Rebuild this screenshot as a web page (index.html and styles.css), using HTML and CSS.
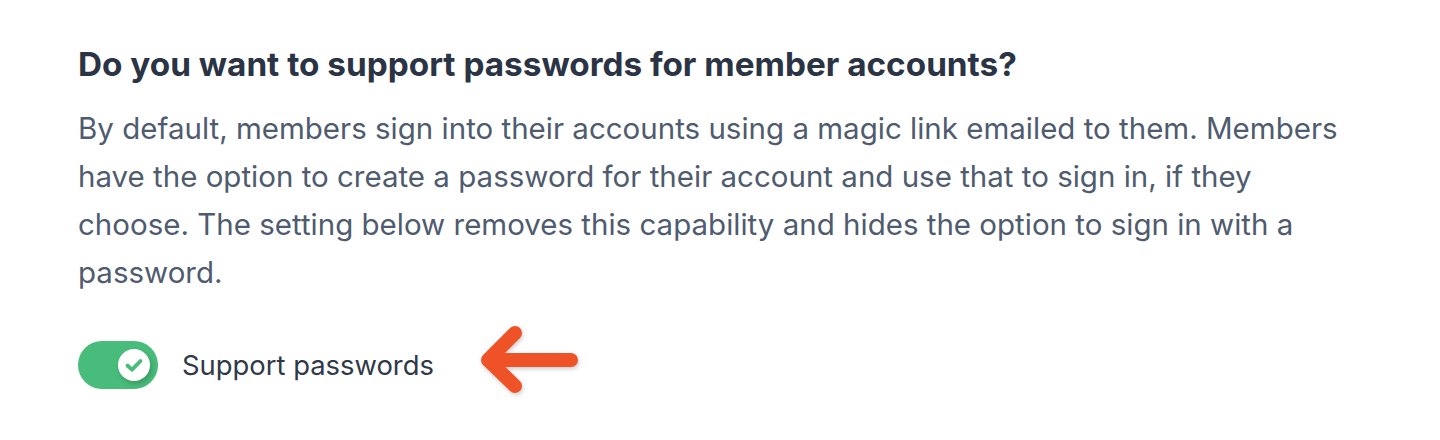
FILE: index.html
```html
<!DOCTYPE html>
<html>
<head>
<meta charset="utf-8">
<link rel="stylesheet" href="styles.css">
</head>
<body>
<div class="panel">
  <h2 class="title">Do you want to support passwords for member accounts?</h2>
  <p class="desc">By default, members sign into their accounts using a magic link emailed to them. Members have the option to create a password for their account and use that to sign in, if they choose. The setting below removes this capability and hides the option to sign in with a password.</p>
  <div class="row">
    <span class="toggle">
      <span class="knob">
        <svg width="20" height="16" viewBox="0 0 20 16"><path d="M3.5 8.5l4.5 4.2L16.5 4" fill="none" stroke="#48bc7a" stroke-width="3.8" stroke-linecap="round" stroke-linejoin="round"/></svg>
      </span>
    </span>
    <span class="label">Support passwords</span>
    <svg class="arrow" width="110" height="80" viewBox="0 0 110 80">
      <g fill="none" stroke="#f05228" stroke-width="14" stroke-linecap="round" stroke-linejoin="round">
        <path d="M35 13L8 40L35 66M8 40H91"/>
      </g>
    </svg>
  </div>
</div>
</body>
</html>
```
FILE: styles.css
```css
html, body {
  margin: 0;
  padding: 0;
  background: #ffffff;
}
.panel {
  padding: 40px 78px;
  font-family: Inter, "Open Sans", sans-serif;
}
.title {
  margin: 0;
  font-size: 33.3px;
  line-height: 48px;
  font-weight: 700;
  color: #2b3445;
}
.desc {
  margin: 16px 0 0;
  max-width: 1300px;
  font-size: 29.5px;
  line-height: 48px;
  color: #4f5b6e;
}
.row {
  margin-top: 45px;
  display: flex;
  align-items: center;
  height: 48px;
}
.toggle {
  width: 80px;
  height: 48px;
  border-radius: 24px;
  background: #48bc7a;
  display: flex;
  align-items: center;
  justify-content: flex-end;
  padding-right: 8px;
  box-sizing: border-box;
}
.knob {
  width: 32px;
  height: 32px;
  border-radius: 50%;
  background: #fff;
  display: flex;
  align-items: center;
  justify-content: center;
  box-shadow: 2px 3px 5px rgba(0, 0, 0, 0.18);
}
.label {
  margin-left: 24px;
  font-size: 27.4px;
  color: #2f3949;
}
.arrow {
  margin-left: 46px;
  margin-bottom: 10px;
  filter: drop-shadow(1px 2px 2px rgba(0, 0, 0, 0.2));
}
```
